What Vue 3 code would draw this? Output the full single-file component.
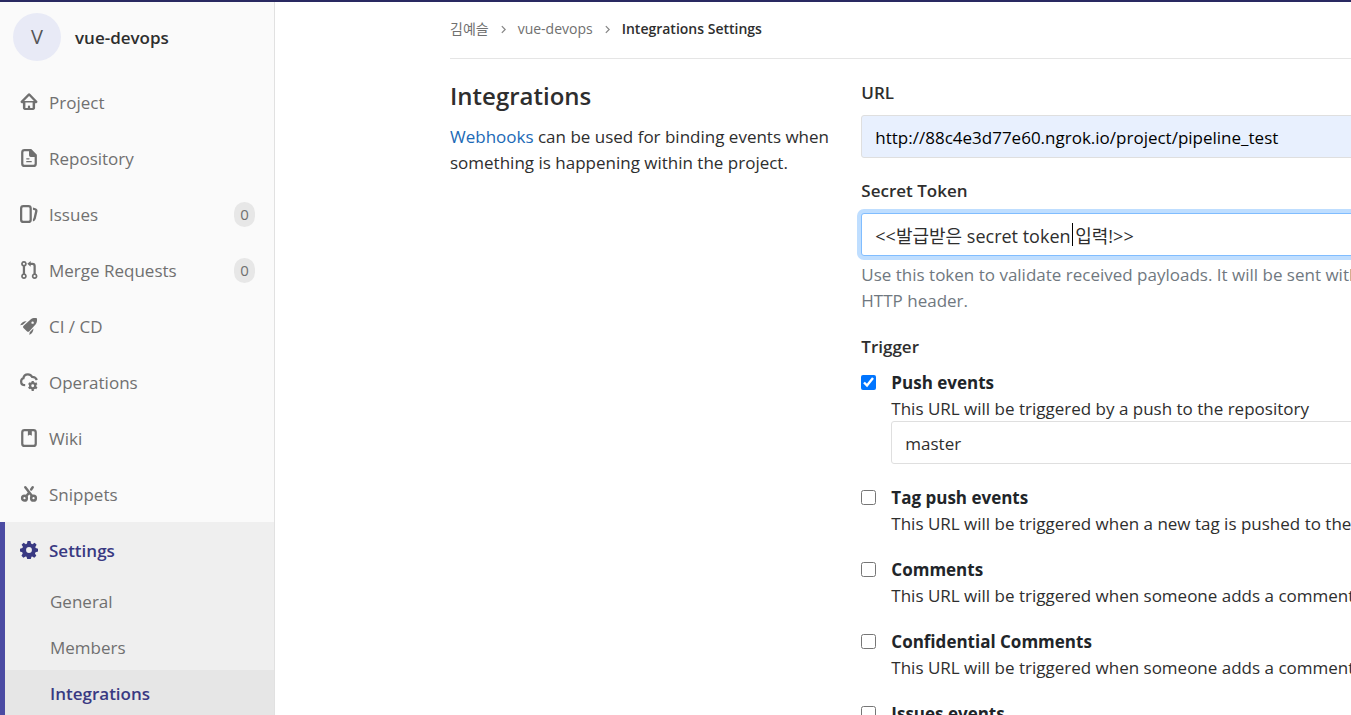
<script setup>
import { ref } from 'vue'

const navItems = [
  { label: 'Project', icon: 'home' },
  { label: 'Repository', icon: 'doc' },
  { label: 'Issues', icon: 'issues', count: 0 },
  { label: 'Merge Requests', icon: 'merge', count: 0 },
  { label: 'CI / CD', icon: 'rocket' },
  { label: 'Operations', icon: 'cloudgear' },
  { label: 'Wiki', icon: 'book' },
  { label: 'Snippets', icon: 'scissors' },
]

const subItems = [
  { label: 'General' },
  { label: 'Members' },
  { label: 'Integrations', active: true },
]

const url = ref('http://88c4e3d77e60.ngrok.io/project/pipeline_test')
const token = ref('<<발급받은 secret token 입력!>>')

const triggers = ref([
  { id: 'push', title: 'Push events', text: 'This URL will be triggered by a push to the repository', checked: true, branch: 'master' },
  { id: 'tag', title: 'Tag push events', text: 'This URL will be triggered when a new tag is pushed to the repository', checked: false },
  { id: 'comments', title: 'Comments', text: 'This URL will be triggered when someone adds a comment', checked: false },
  { id: 'confidential', title: 'Confidential Comments', text: 'This URL will be triggered when someone adds a comment on a confidential issue', checked: false },
  { id: 'issues', title: 'Issues events', text: 'This URL will be triggered when an issue is created/updated/merged', checked: false },
])
</script>

<template>
  <div class="page">
    <aside class="sidebar">
      <a href="#" class="project">
        <span class="avatar">V</span>
        <span class="project-name">vue-devops</span>
      </a>
      <nav>
        <a v-for="item in navItems" :key="item.label" href="#" class="nav-item">
          <svg class="icon" viewBox="0 0 16 16" aria-hidden="true">
            <g v-if="item.icon === 'home'">
              <path fill-rule="evenodd" d="M3.7 7h8.700L8.070 2.600zM7 13.370V12a1 1 0 0 1 2 0v1.370h2.200V8.500H4.800v4.870zM13.400 9v4.300c0 .9-.7 1.700-1.700 1.700H4.300c-1 0-1.700-.8-1.700-1.700V9h-1a1.100 1.100 0 0 1-.8-1.900L6.930.9a1.500 1.500 0 0 1 2.270 0l6 6.200A1.100 1.100 0 0 1 14.400 9z" />
            </g>
            <g v-else-if="item.icon === 'doc'">
              <path fill-rule="evenodd" d="M4 0h6l5 5v8a3 3 0 0 1-3 3H4a3 3 0 0 1-3-3V3a3 3 0 0 1 3-3zm0 2a1 1 0 0 0-1 1v10a1 1 0 0 0 1 1h8a1 1 0 0 0 1-1V7h-3.500a1.500 1.500 0 0 1-1.500-1.500V2z" />
              <path d="M6 8.200h2a.5.5 0 0 1 0 1.100H6a.5.5 0 0 1 0-1.100zm0 2.500h4a.5.5 0 0 1 0 1.100H6a.5.5 0 0 1 0-1.100z" />
            </g>
            <g v-else-if="item.icon === 'issues'">
              <path fill-rule="evenodd" d="M3 0h4.500a3 3 0 0 1 3 3v10a3 3 0 0 1-3 3H3a3 3 0 0 1-3-3V3a3 3 0 0 1 3-3zm0 2a1 1 0 0 0-1 1v10a1 1 0 0 0 1 1h4.500a1 1 0 0 0 1-1V3a1 1 0 0 0-1-1z" />
              <path d="m11.500 2.200 2.200.6a2.500 2.500 0 0 1 1.800 2.900l-1.500 6.600a3 3 0 0 1-2.500 2.300v-2.200l.5-.6 1.500-6.600a.5.5 0 0 0-.4-.6l-1.600-.4z" />
            </g>
            <g v-else-if="item.icon === 'merge'">
              <path fill-rule="evenodd" d="M3.500 0a2.500 2.500 0 0 1 1 4.800v6.400a2.500 2.500 0 1 1-2 0V4.800A2.500 2.500 0 0 1 3.500 0zm0 1.500a1 1 0 1 0 0 2 1 1 0 0 0 0-2zm0 11a1 1 0 1 0 0 2 1 1 0 0 0 0-2z" />
              <path fill-rule="evenodd" d="M9.500 0v1.500H11a3 3 0 0 1 3 3v6.700a2.500 2.500 0 1 1-2 0V4.500a1 1 0 0 0-1-1H9.500V5L6.500 2.500zM13 12.500a1 1 0 1 0 0 2 1 1 0 0 0 0-2z" />
            </g>
            <g v-else-if="item.icon === 'rocket'">
              <path fill-rule="evenodd" d="M9.400 2.200C11 .8 13.500.8 15 1.200c.4 1.500.2 3.900-1.200 5.400l-5.500 6.100c-.5.6-1.400.6-2 .1l-3.200-3.100c-.5-.6-.5-1.500.1-2zM11.200 3.900a1.100 1.100 0 1 0 0 2.200 1.100 1.100 0 0 0 0-2.200z" />
              <path d="M5.900 3.800 2.500 6.900.2 7.300C1 5.500 2.900 3.600 5.900 3.800zM11.900 10.300c.2 2.900-1.900 5-3.600 5.700l.3-2.400z" />
            </g>
            <g v-else-if="item.icon === 'cloudgear'">
              <path d="M4.600 10.800C2.300 10.800 1 9.300 1 7.500c0-1.500.9-2.500 2-2.800C3.300 2.600 5 1.200 7 1.200c1.700 0 3 .9 3.700 2.200 2.200 0 3.600 1.100 4.300 2.800" class="stroke" />
              <circle cx="11.300" cy="11.300" r="2.300" class="stroke" />
              <path d="M11.300 7v1.600m0 5.400v2M7.700 9.200l1.400.8m4.400 2.600 1.500.9m-7.300 0 1.400-.9m4.400-2.600 1.500-.8" class="stroke" />
            </g>
            <g v-else-if="item.icon === 'book'">
              <path fill-rule="evenodd" d="M4 0h8a3 3 0 0 1 3 3v10a3 3 0 0 1-3 3H4a3 3 0 0 1-3-3V3a3 3 0 0 1 3-3zm0 2a1 1 0 0 0-1 1v10a1 1 0 0 0 1 1h8a1 1 0 0 0 1-1V3a1 1 0 0 0-1-1h-1.500v4L8.750 5 7 6V2z" />
            </g>
            <g v-else>
              <circle cx="4" cy="11.700" r="2.100" class="stroke heavy" />
              <circle cx="12" cy="11.700" r="2.100" class="stroke heavy" />
              <path d="m4.700 2 6 7.800M11.300 2 9.900 4M7.300 7.700l-1.800 2.300" class="stroke heavy" stroke-linecap="round" />
            </g>
          </svg>
          <span class="nav-label">{{ item.label }}</span>
          <span v-if="item.count !== undefined" class="count">{{ item.count }}</span>
        </a>
        <div class="nav-group">
          <a href="#" class="nav-item current">
            <svg class="icon" viewBox="0 0 16 16" aria-hidden="true">
              <path fill-rule="evenodd" d="M6.700 0h2.600l.5 2.300 1.200.5 2-1.200 1.800 1.800-1.200 2 .3.800 2.100.6v2.600l-2.200.5-.5 1.200 1.200 2-1.800 1.800-1.900-1.200-.6.400-.6 1.900H6.400l-.6-1.900-.8-.400-2 1.200-1.700-1.800 1.100-2-.4-1L0 9.400V6.800l2.200-.6.400-1-1.200-1.800 1.800-1.800 2 1.200 1-.5zM8 5.400a2.600 2.600 0 1 0 0 5.200 2.600 2.600 0 0 0 0-5.200z" />
            </svg>
            <span class="nav-label">Settings</span>
          </a>
          <a v-for="s in subItems" :key="s.label" href="#" class="sub-item" :class="{ active: s.active }">{{ s.label }}</a>
        </div>
      </nav>
    </aside>

    <main class="main">
      <div class="content">
        <nav class="breadcrumb" aria-label="Breadcrumb">
          <a href="#">김예슬</a>
          <svg class="chevron" viewBox="0 0 6 10" aria-hidden="true"><path d="m1 1 4 4-4 4" /></svg>
          <a href="#">vue-devops</a>
          <svg class="chevron" viewBox="0 0 6 10" aria-hidden="true"><path d="m1 1 4 4-4 4" /></svg>
          <a href="#" class="here">Integrations Settings</a>
        </nav>
        <div class="columns">
          <section class="intro">
            <h1>Integrations</h1>
            <p><a href="#">Webhooks</a> can be used for binding events when something is happening within the project.</p>
          </section>
          <form class="form" @submit.prevent>
            <div class="field">
              <label class="field-label" for="hook-url">URL</label>
              <input id="hook-url" v-model="url" class="control filled" type="text" spellcheck="false">
            </div>
            <div class="field">
              <label class="field-label" for="hook-token">Secret Token</label>
              <div class="token-box">
                <input id="hook-token" v-model="token" class="control focused" type="text" spellcheck="false">
                <span class="caret"></span>
              </div>
              <p class="help">Use this token to validate received payloads. It will be sent with the request in the X-Gitlab-Token<br>HTTP header.</p>
            </div>
            <fieldset class="triggers">
              <legend class="field-label">Trigger</legend>
              <div v-for="t in triggers" :key="t.id" class="trigger">
                <input :id="t.id" v-model="t.checked" class="check" type="checkbox">
                <div class="trigger-body">
                  <label :for="t.id">{{ t.title }}</label>
                  <p>{{ t.text }}</p>
                  <input v-if="t.branch" v-model="t.branch" class="control" type="text" aria-label="Branch name" spellcheck="false">
                </div>
              </div>
            </fieldset>
          </form>
        </div>
      </div>
    </main>
  </div>
</template>

<style>
body {
  margin: 0;
  overflow: hidden;
}
</style>

<style scoped>
.page {
  box-sizing: border-box;
  display: flex;
  height: 100vh;
  overflow: hidden;
  border-top: 2px solid #292961;
  background: #fff;
  color: #2e2e2e;
  font: 17px/26px "Open Sans", "Noto Sans CJK KR", sans-serif;
}
a { color: inherit; text-decoration: none; }
p { margin: 0; }

.sidebar {
  box-sizing: border-box;
  flex: 0 0 275px;
  border-right: 1px solid #e1e1e1;
  background: #fafafa;
  color: #707070;
}
.project {
  display: flex;
  align-items: center;
  gap: 14px;
  padding: 11px 13px 13px;
}
.avatar {
  display: flex;
  align-items: center;
  justify-content: center;
  width: 48px;
  height: 48px;
  border-radius: 50%;
  background: #e8eaf6;
  color: #555;
  font-size: 20px;
}
.project-name {
  padding-top: 2px;
  color: #2e2e2e;
  font-weight: 600;
}
.nav-item {
  display: flex;
  align-items: center;
  gap: 11px;
  height: 56px;
  padding: 0 19px 0 20px;
}
.nav-label {
  flex: 1;
  padding-top: 2px;
}
.icon {
  width: 18px;
  height: 18px;
  fill: currentColor;
}
.stroke {
  fill: none;
  stroke: currentColor;
  stroke-width: 2;
}
.heavy { stroke-width: 2.200; }
.count {
  box-sizing: border-box;
  width: 21px;
  border-radius: 12px;
  background: #e7e7e7;
  font-size: 15px;
  line-height: 25px;
  text-align: center;
}
.nav-group {
  border-left: 5px solid #4b4ba3;
  background: #efefef;
}
.nav-item.current {
  padding-left: 15px;
  color: #393982;
  font-weight: 600;
}
.sub-item {
  display: block;
  padding: 11px 45px 9px;
}
.sub-item.active {
  background: #e6e6e6;
  color: #393982;
  font-weight: 600;
}

.main {
  flex: 1;
  min-width: 0;
  overflow: hidden;
  padding-left: 175px;
}
.content { min-width: 1234px; }
.breadcrumb {
  display: flex;
  align-items: center;
  gap: 12px;
  height: 54px;
  padding-bottom: 2px;
  border-bottom: 1px solid #e5e5e5;
  color: #707070;
  font-size: 14px;
}
.here { color: #2e2e2e; font-weight: 600; }
.chevron {
  width: 5px;
  height: 9px;
  fill: none;
  stroke: #868686;
  stroke-width: 1.500;
}
.columns {
  display: grid;
  grid-template-columns: 1fr 2fr;
  padding-top: 21px;
}
.intro { padding-right: 28px; }
h1 {
  margin: 0 0 12px;
  font-size: 24px;
  font-weight: 600;
  line-height: 32px;
}
.intro p a { color: #1b69b6; }
.field { margin-bottom: 20px; }
.field-label {
  display: block;
  margin-bottom: 9px;
  padding: 0;
  font-weight: 600;
}
.control {
  box-sizing: border-box;
  display: block;
  width: 100%;
  height: 43px;
  padding: 1px 13px 0;
  border: 1px solid #dfdfdf;
  border-radius: 3px;
  outline: 0;
  background: #fff;
  color: #2e2e2e;
  font: inherit;
}
.filled { background: #e8f0fe; color: #000; }
.focused {
  border-color: #80bdff;
  box-shadow: 0 0 0 4px #bfdeff;
  font-size: 18px;
}
.token-box { position: relative; }
.caret {
  position: absolute;
  top: 10px;
  left: 211px;
  width: 1px;
  height: 23px;
  background: #000;
}
.help {
  margin-top: 6px;
  color: #707880;
  white-space: nowrap;
}
.triggers {
  margin: 0;
  padding: 0;
  border: 0;
}
.trigger {
  display: flex;
  gap: 15px;
  margin-bottom: 20px;
}
.check {
  flex: none;
  width: 15px;
  height: 15px;
  margin: 6px 0 0;
  accent-color: #0075ff;
}
.trigger-body { flex: 1; white-space: nowrap; }
.trigger-body label {
  display: block;
  color: #212529;
  font-weight: 700;
  line-height: 28px;
}
.trigger-body p { line-height: 24px; }
</style>
